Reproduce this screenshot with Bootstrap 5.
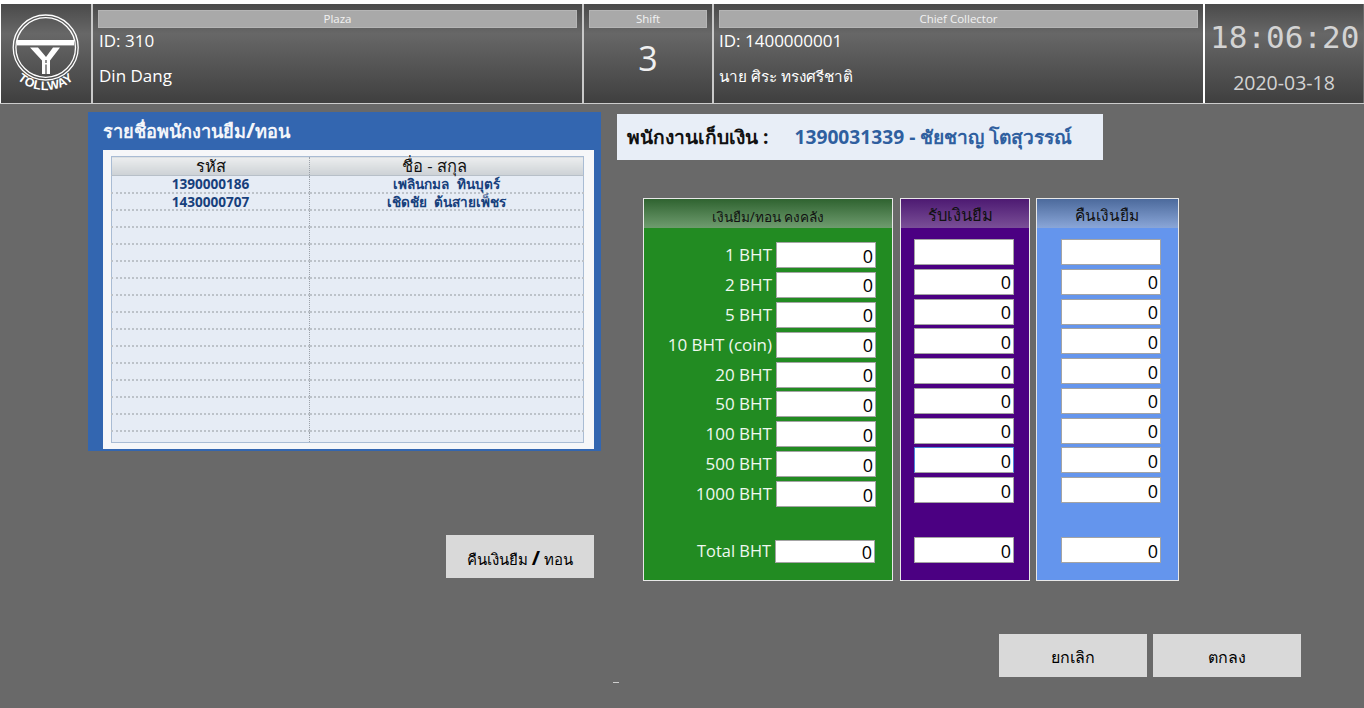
<!DOCTYPE html>
<html lang="th">
<head>
<meta charset="utf-8">
<title>Tollway</title>
<link href="https://cdn.jsdelivr.net/npm/bootstrap@5.3.0/dist/css/bootstrap.min.css" rel="stylesheet">
<style>
html,body{height:708px;overflow:hidden}
body{background:#696969;font-family:"Open Sans","Noto Sans","Liberation Sans",sans-serif;color:#000}
.white-edge{height:4px;background:#fff}
.top-strip{height:100px;border-bottom:1px solid #ccc}
.cell{height:99px;background:linear-gradient(#4a4a4a,#676767 30%,#3f3f3f);border-left:2px solid #c9c9c9;color:#fff;padding:6px 5px 0 5px;flex:none}
.cell-logo{width:91px;border-left:1px solid #fff;padding:0}
.cell-plaza{width:491px;flex:none}
.cell-shift{width:130px}
.cell-chief{width:491px}
.cell-clock{width:160px;text-align:center;border-left-color:#fff}
.cap{height:18px;background:#a9a9a9;border:1px solid #b5b5b5;font-size:11.5px;line-height:16px;text-align:center;color:#f2f2f2}
.val{font-size:17px;line-height:22px;margin-top:2px}
.cell-plaza .val{padding-left:1px}
.val2{margin-top:13px}
.val-th{font-size:15.3px}
.shift-num{font-size:34px;line-height:46px;text-align:center;margin-top:7px;color:#f0f0f0}
.clock{font-family:"DejaVu Sans Mono","Liberation Mono",monospace;font-size:31px;line-height:40px;color:#d3d3d3;margin-top:7px;white-space:nowrap}
.date{font-size:19.5px;line-height:24px;color:#d3d3d3;margin-top:14px}
.work{padding-top:8px}
.left-col{width:513px;margin-left:88px;flex:none}
.panel{height:339px;background:#3366b0;padding:7px 7px 2px 15px}
.panel-title{font-size:18.2px;font-weight:700;line-height:24px;color:#f3f5fa;height:31px;white-space:nowrap}
.panel-title i{font-style:normal;font-size:22px;line-height:20px}
.panel-body{height:299px;background:#f6f7f9;padding:6px 10px 7px 8px}
.emp-table{width:100%;table-layout:fixed;margin:0;border:1px solid #a9bcd4;background:#e6ecf5}
.emp-table th,.emp-table td{padding:0;text-align:center;border-left:1px dotted #9aa0a8;background:#e6ecf5;color:#17407c;font-size:13.6px;font-weight:700;line-height:15px;height:17px;border-bottom:2px dotted #bcc2c9;box-shadow:none;white-space:nowrap}
.emp-table th{height:19px;background:linear-gradient(#eceeef,#ccd1d5);color:#111;font-size:16.5px;font-weight:400;border-bottom:1px solid #b7bfc8;line-height:15px;vertical-align:top;padding-top:1px}
.emp-table th+th{padding-right:24px}
.emp-table th:first-child,.emp-table td:first-child{width:198px;border-left:0}
.emp-table .tail td{height:12px;border-bottom:0}
.return-wrap{margin-top:84px;padding-right:7px}
.flat-btn{width:148px;height:43px;background:#d9d9d9;border:0;border-radius:0;color:#000;font-size:15px;font-weight:400;padding:2px 0 0}
.flat-btn:hover{background:#d9d9d9;color:#000}
.flat-btn b{font-size:20px;font-weight:700}
.btn-lg-txt{font-size:16px;padding-top:3px}
.right-col{margin-left:16px;flex:none;width:600px}
.emp-box{width:486px;height:46px;margin-top:2px;background:#e8eef7;font-size:19.2px;font-weight:700;line-height:46px;padding-left:10px;color:#111;white-space:nowrap}
.emp-box span{color:#2f5f9f;margin-left:26px}
.cards{margin-top:38px;margin-left:26px;gap:7px}
.m-card{height:383px;border:1px solid #e8e8e8;color:#fff;flex:none}
.m-green{width:250px;background:#228b22}
.m-purple{width:130px;background:#4b0082}
.m-blue{width:143px;background:#6495ed;margin-left:-1px}
.m-head{height:29px;font-size:15.5px;line-height:30px;text-align:center;color:#111}
.m-green .m-head{background:linear-gradient(#2f6330,#6f9c6f);font-size:13.6px;line-height:36px}
.m-purple .m-head{background:linear-gradient(#4d1a72,#7a4f97);font-size:16.5px;line-height:32px;padding-right:10px}
.m-blue .m-head{background:linear-gradient(#4c6a9c,#8aa6d8);line-height:32px;padding-right:2px}
.rows{gap:3.875px;padding-top:14px}
.rows-s{gap:3.75px;padding-top:11px}
.line{height:26px;display:flex;justify-content:flex-end;align-items:center}
.line label{font-size:17px;line-height:24px;color:#f0f8f0;margin-right:4px;white-space:nowrap}
.m-green .line{padding-right:16px}
.m-purple .line{padding-right:15px}
.m-blue .line{padding-right:17px}
.amt{width:100px;height:26px;flex:none;border:1px solid #a4a4a4;border-radius:0;background:#fff;font-size:18px;line-height:22px;text-align:right;padding:1px 2px 0 0;color:#000;min-height:0}
.amt.active{border-color:#4a88d8 #4a88d8 #a4a4a4 #4a88d8}
.gap-g{height:24.2px}
.gap-s{height:26.5px}
.m-green .total-line{padding-right:17px}
.total-line .amt{height:23px;padding-top:0}
.m-green .total-line label{margin:0 4px 2px 0;font-size:16.4px}
.bottom-btns{position:absolute;top:634px;right:63px;gap:6px}
.tick{position:absolute;left:613px;top:682px;width:6px;height:1px;background:#cfcfcf}
</style>
</head>
<body>
<div class="white-edge"></div>
<div class="top-strip d-flex">
  <div class="cell cell-logo">
    <svg class="d-block" width="90" height="99" viewBox="1 4 90 99" aria-label="Tollway logo">
      <circle cx="45.7" cy="47.5" r="32.5" fill="none" stroke="#fff" stroke-width="1.3"/>
      <circle cx="45.7" cy="47.5" r="29.8" fill="none" stroke="#fff" stroke-width="1.3"/>
      <rect x="17" y="40" width="57" height="5.4" fill="#fff"/>
      <path d="M30 47.5H38L46 57L53 47.5H60L50 60.5V74H42V60.5Z" fill="#fff"/>
      <path d="M46 60V74" stroke="#555" stroke-width="1.3" stroke-dasharray="3 1.5 12"/>
      <defs><path id="arc" d="M4.7 60 A43 43 0 0 0 86.7 60"/></defs>
      <text font-family="Liberation Sans,sans-serif" font-weight="700" font-size="12.5" fill="#fff" letter-spacing="0.4"><textPath href="#arc" startOffset="50%" text-anchor="middle">TOLLWAY</textPath></text>
    </svg>
  </div>
  <div class="cell cell-plaza">
    <div class="cap">Plaza</div>
    <div class="val">ID: 310</div>
    <div class="val val2">Din Dang</div>
  </div>
  <div class="cell cell-shift">
    <div class="cap">Shift</div>
    <div class="shift-num">3</div>
  </div>
  <div class="cell cell-chief">
    <div class="cap">Chief Collector</div>
    <div class="val">ID: 1400000001</div>
    <div class="val val2 val-th">นาย ศิระ ทรงศรีชาติ</div>
  </div>
  <div class="cell cell-clock">
    <div class="clock">18:06:20</div>
    <div class="date">2020-03-18</div>
  </div>
</div>

<div class="work d-flex">
  <div class="left-col">
    <div class="panel">
      <div class="panel-title">รายชื่อพนักงานยืม<i>/</i>ทอน</div>
      <div class="panel-body">
        <table class="emp-table">
          <thead><tr><th>รหัส</th><th>ชื่อ - สกุล</th></tr></thead>
          <tbody>
            <tr><td>1390000186</td><td>เพลินกมล&nbsp; ทินบุตร์</td></tr>
            <tr><td>1430000707</td><td>เชิดชัย&nbsp; ต้นสายเพ็ชร</td></tr>
            <tr><td></td><td></td></tr><tr><td></td><td></td></tr><tr><td></td><td></td></tr>
            <tr><td></td><td></td></tr><tr><td></td><td></td></tr><tr><td></td><td></td></tr>
            <tr><td></td><td></td></tr><tr><td></td><td></td></tr><tr><td></td><td></td></tr>
            <tr><td></td><td></td></tr><tr><td></td><td></td></tr><tr><td></td><td></td></tr>
            <tr><td></td><td></td></tr>
            <tr class="tail"><td></td><td></td></tr>
          </tbody>
        </table>
      </div>
    </div>
    <div class="return-wrap d-flex justify-content-end">
      <button type="button" class="btn flat-btn">คืนเงินยืม <b>/</b> ทอน</button>
    </div>
  </div>
  <div class="right-col">
    <div class="emp-box">พนักงานเก็บเงิน :<span>1390031339 - ชัยชาญ โตสุวรรณ์</span></div>
    <div class="cards d-flex">
      <div class="m-card m-green">
        <div class="m-head">เงินยืม/ทอน คงคลัง</div>
        <div class="rows d-flex flex-column">
          <div class="line"><label>1 BHT</label><input class="form-control amt" value="0"></div>
          <div class="line"><label>2 BHT</label><input class="form-control amt" value="0"></div>
          <div class="line"><label>5 BHT</label><input class="form-control amt" value="0"></div>
          <div class="line"><label>10 BHT (coin)</label><input class="form-control amt" value="0"></div>
          <div class="line"><label>20 BHT</label><input class="form-control amt" value="0"></div>
          <div class="line"><label>50 BHT</label><input class="form-control amt" value="0"></div>
          <div class="line"><label>100 BHT</label><input class="form-control amt" value="0"></div>
          <div class="line"><label>500 BHT</label><input class="form-control amt" value="0"></div>
          <div class="line"><label>1000 BHT</label><input class="form-control amt" value="0"></div>
          <div class="gap-g"></div>
          <div class="line total-line"><label>Total BHT</label><input class="form-control amt" value="0"></div>
        </div>
      </div>
      <div class="m-card m-purple">
        <div class="m-head">รับเงินยืม</div>
        <div class="rows-s d-flex flex-column">
          <div class="line"><input class="form-control amt" value=""></div>
          <div class="line"><input class="form-control amt" value="0"></div>
          <div class="line"><input class="form-control amt" value="0"></div>
          <div class="line"><input class="form-control amt" value="0"></div>
          <div class="line"><input class="form-control amt" value="0"></div>
          <div class="line"><input class="form-control amt" value="0"></div>
          <div class="line"><input class="form-control amt" value="0"></div>
          <div class="line"><input class="form-control amt active" value="0"></div>
          <div class="line"><input class="form-control amt" value="0"></div>
          <div class="gap-s"></div>
          <div class="line"><input class="form-control amt" value="0"></div>
        </div>
      </div>
      <div class="m-card m-blue">
        <div class="m-head">คืนเงินยืม</div>
        <div class="rows-s d-flex flex-column">
          <div class="line"><input class="form-control amt" value=""></div>
          <div class="line"><input class="form-control amt" value="0"></div>
          <div class="line"><input class="form-control amt" value="0"></div>
          <div class="line"><input class="form-control amt" value="0"></div>
          <div class="line"><input class="form-control amt" value="0"></div>
          <div class="line"><input class="form-control amt" value="0"></div>
          <div class="line"><input class="form-control amt" value="0"></div>
          <div class="line"><input class="form-control amt" value="0"></div>
          <div class="line"><input class="form-control amt" value="0"></div>
          <div class="gap-s"></div>
          <div class="line"><input class="form-control amt" value="0"></div>
        </div>
      </div>
    </div>
  </div>
</div>
<div class="bottom-btns d-flex">
  <button type="button" class="btn flat-btn btn-lg-txt">ยกเลิก</button>
  <button type="button" class="btn flat-btn btn-lg-txt">ตกลง</button>
</div>
<div class="tick"></div>
</body>
</html>
